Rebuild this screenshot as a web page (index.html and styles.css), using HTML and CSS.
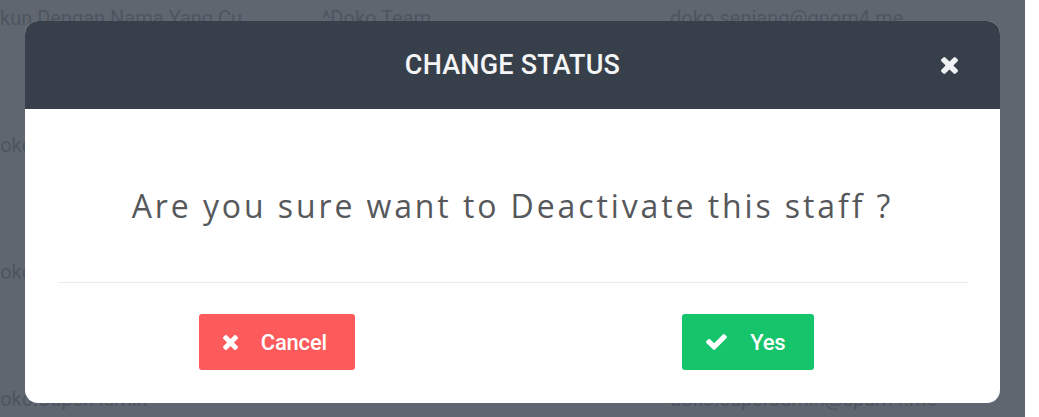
FILE: index.html
```html
<!DOCTYPE html>
<html lang="en">
<head>
  <meta charset="UTF-8" />
  <meta name="viewport" content="width=device-width, initial-scale=1.0"/>
  <title>Change Status</title>
  <link rel="stylesheet" href="styles.css">
</head>
<body>
  <div class="page">
    <div class="screen">
      <!-- staff list behind the dimmed backdrop -->
      <div class="staff-table">
        <div class="staff-row">
          <span class="cell cell-name">Akun Dengan Nama Yang Cu</span>
          <span class="cell">^Doko Team</span>
          <span class="cell">doko.seniang@gnom4.me</span>
        </div>
        <div class="staff-row">
          <span class="cell cell-name">Doko</span>
          <span class="cell"></span>
          <span class="cell"></span>
        </div>
        <div class="staff-row">
          <span class="cell cell-name">Doko</span>
          <span class="cell"></span>
          <span class="cell"></span>
        </div>
        <div class="staff-row">
          <span class="cell cell-name">Doko.SuperAdmin</span>
          <span class="cell"></span>
          <span class="cell">doko.superadmin@spam4.me</span>
        </div>
      </div>

      <div class="backdrop">
        <div class="modal">
          <div class="modal-header">
            <span></span>
            <h2 class="modal-title">CHANGE STATUS</h2>
            <button class="close-btn" aria-label="Close">
              <svg viewBox="110 366 1188 1188">
                <path d="M1298 1322q0 40-28 68l-136 136q-28 28-68 28t-68-28l-294-294-294 294q-28 28-68 28t-68-28l-136-136q-28-28-28-68t28-68l294-294-294-294q-28-28-28-68t28-68l136-136q28-28 68-28t68 28l294 294 294-294q28-28 68-28t68 28l136 136q28 28 28 68t-28 68l-294 294 294 294q28 28 28 68z" fill="currentColor"/>
              </svg>
            </button>
          </div>
          <div class="modal-body">
            <p class="modal-question">Are you sure want to Deactivate this staff ?</p>
          </div>
          <div class="modal-divider"></div>
          <div class="modal-footer">
            <button class="btn btn-cancel">
              <svg class="btn-icon icon-times" viewBox="110 366 1188 1188">
                <path d="M1298 1322q0 40-28 68l-136 136q-28 28-68 28t-68-28l-294-294-294 294q-28 28-68 28t-68-28l-136-136q-28-28-28-68t28-68l294-294-294-294q-28-28-28-68t28-68l136-136q28-28 68-28t68 28l294 294 294-294q28-28 68-28t68 28l136 136q28 28 28 68t-28 68l-294 294 294 294q28 28 28 68z" fill="currentColor"/>
              </svg>
              <span>Cancel</span>
            </button>
            <button class="btn btn-yes">
              <svg class="btn-icon icon-check" viewBox="121 334 1550 1188">
                <path d="M1671 566q0 40-28 68l-724 724-136 136q-28 28-68 28t-68-28l-136-136-362-362q-28-28-28-68t28-68l136-136q28-28 68-28t68 28l294 295 656-657q28-28 68-28t68 28l136 136q28 28 28 68z" fill="currentColor"/>
              </svg>
              <span>Yes</span>
            </button>
          </div>
        </div>
      </div>
    </div>
    <div class="side-strip"></div>
  </div>
</body>
</html>
```

FILE: styles.css
```css
html, body {
  margin: 0;
  padding: 0;
  height: 100vh;
  width: 100vw;
  overflow: hidden;
  font-family: Roboto, "Liberation Sans", sans-serif;
}
.page {
  display: flex;
  height: 100%;
}
.screen {
  flex: 1;
  position: relative;
  overflow: hidden;
  background: #5f6670;
}
.side-strip {
  width: 14px;
  background: #ffffff;
}
/* 背景表格 */
.staff-table {
  margin-top: -46px;
}
.staff-row {
  display: grid;
  grid-template-columns: 322px 348px 1fr;
  align-items: center;
  height: 127px;
  font-size: 20px;
  color: #4d555f;
  white-space: nowrap;
}
.cell-name {
  margin-left: -13px;
}
/* 弹窗 */
.backdrop {
  position: absolute;
  inset: 0;
  display: flex;
  justify-content: center;
  align-items: flex-start;
  padding-top: 21px;
}
.modal {
  width: 975px;
  background: #fff;
  border-radius: 13px;
  overflow: hidden;
}
.modal-header {
  display: grid;
  grid-template-columns: 1fr auto 1fr;
  align-items: center;
  height: 88px;
  padding-right: 42px;
  padding-left: 42px;
  background: #37404a;
}
.modal-title {
  margin: 0;
  color: #f4f5f6;
  font-size: 27px;
  font-weight: 500;
  letter-spacing: 0.2px;
}
.close-btn {
  justify-self: end;
  display: flex;
  padding: 0;
  border: none;
  background: transparent;
  color: #f0f1f2;
  cursor: pointer;
}
.close-btn svg {
  width: 17px;
  height: 17px;
}
.modal-body {
  padding: 75px 20px 54px;
  text-align: center;
}
.modal-question {
  margin: 0;
  font-family: "Open Sans", sans-serif;
  font-size: 32px;
  line-height: 44px;
  color: #56585b;
  letter-spacing: 2.9px;
}
.modal-divider {
  height: 1px;
  margin: 0 32px 0 33px;
  background: #ebebeb;
}
.modal-footer {
  display: grid;
  grid-template-columns: 1fr 1fr;
  justify-items: center;
  padding: 31px 16px 33px;
}
.btn {
  display: flex;
  align-items: center;
  gap: 23px;
  height: 56px;
  padding: 0 24px;
  border: none;
  border-radius: 3px;
  color: #fff;
  font-family: Roboto, "Liberation Sans", sans-serif;
  font-size: 22px;
  font-weight: 500;
  letter-spacing: -0.2px;
  cursor: pointer;
}
.btn-cancel {
  width: 156px;
  background: #fd5a5b;
}
.btn-yes {
  width: 132px;
  background: #15c46b;
}
.icon-times {
  width: 15px;
  height: 15px;
}
.icon-check {
  width: 21px;
  height: 16px;
}
```
